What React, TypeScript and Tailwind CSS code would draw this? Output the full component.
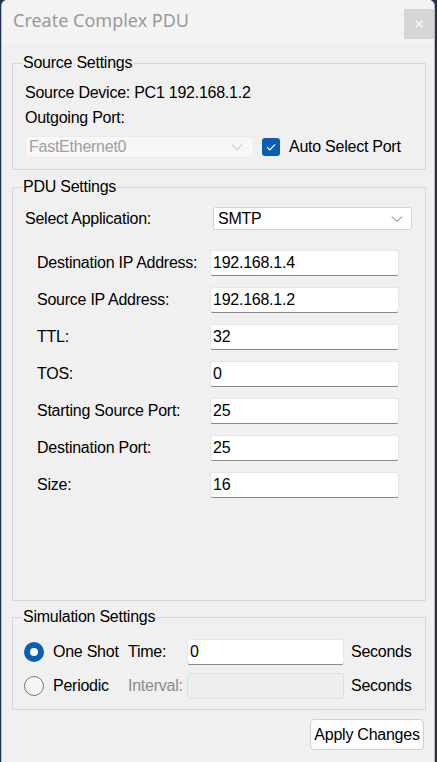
import React from "react";

const F = { fontFamily: '"Liberation Sans", Arial, sans-serif' };

function Chevron({ color = "#6b6b6b" }: { color?: string }) {
  return (
    <svg width="12" height="8" viewBox="0 0 12 8" fill="none">
      <path d="M1 1.5 L6 6.5 L11 1.5" stroke={color} strokeWidth="1" />
    </svg>
  );
}

function Field({ label, value }: { label: string; value: string }) {
  return (
    <div className="flex items-center h-[26px]">
      <div className="w-[173px] text-[16px] tracking-[-0.25px] text-black">{label}</div>
      <div className="w-[189px] h-[26px] bg-white border border-[#e6e6e6] border-b-[#8a8a8a] rounded-[3px] flex items-center pl-[2px] text-[16px] text-black">
        {value}
      </div>
    </div>
  );
}

export default function App() {
  return (
    <div className="w-[437px] h-[762px] bg-[#1f3455] flex" style={F}>
      <div className="ml-[1px] w-[434px] h-[762px] bg-[#f0f0f0] border-l border-r border-[#b9b9b9] rounded-t-[6px] flex flex-col overflow-hidden">
        {/* Title bar */}
        <div className="h-[43px] bg-[#f3f3f3] flex items-start shrink-0">
          <div
            className="ml-[11px] mt-[8px] text-[18px] text-[#9a9a9a] leading-[24px]"
            style={{ fontFamily: '"Noto Sans", "Open Sans", sans-serif' }}
          >
            Create Complex PDU
          </div>
          <div className="ml-auto mt-[9px] mr-[0px] w-[30px] h-[30px] bg-[#d5d5d5] flex items-center justify-center">
            <svg width="10" height="10" viewBox="0 0 10 10">
              <path d="M1.5 1.5 L8.5 8.5 M8.5 1.5 L1.5 8.5" stroke="#f4f4f4" strokeWidth="1.6" />
            </svg>
          </div>
        </div>

        <div className="pl-[10px] pr-[8px] flex flex-col text-black text-[16px] tracking-[-0.25px]">
          {/* Source Settings */}
          <fieldset className="mt-[11px] border border-[#d7d7d7] p-0">
            <legend className="ml-[9px] px-[1px] leading-[18px] text-[16px]">Source Settings</legend>
            <div className="pl-[12px] pr-[10px] pb-[10px]">
              <div className="mt-[11px] h-[20px] leading-[20px]">Source Device: PC1 192.168.1.2</div>
              <div className="mt-[5px] h-[20px] leading-[20px]">Outgoing Port:</div>
              <div className="mt-[7px] flex items-center">
                <div className="w-[229px] h-[22px] bg-[#f7f7f7] border border-[#ececec] rounded-[3px] flex items-center pl-[3px] pr-[10px] text-[#a0a0a0]">
                  <span>FastEthernet0</span>
                  <span className="ml-auto">
                    <Chevron color="#b4b4b4" />
                  </span>
                </div>
                <div className="ml-[8px] w-[18px] h-[18px] rounded-[3px] bg-[#0b5cb3] flex items-center justify-center">
                  <svg width="12" height="10" viewBox="0 0 12 10" fill="none">
                    <path d="M2 5.2 L4.8 8 L10 2.5" stroke="#ffffff" strokeWidth="1.1" />
                  </svg>
                </div>
                <div className="ml-[9px]">Auto Select Port</div>
              </div>
            </div>
          </fieldset>

          {/* PDU Settings */}
          <fieldset className="mt-[8px] border border-[#d7d7d7] p-0">
            <legend className="ml-[9px] px-[1px] leading-[18px] text-[16px]">PDU Settings</legend>
            <div className="pl-[12px] pr-[10px] pb-[102px]">
              <div className="mt-[11px] flex items-center h-[23px]">
                <div className="w-[188px]">Select Application:</div>
                <div className="w-[199px] h-[23px] bg-white border border-[#d2d2d2] rounded-[3px] flex items-center pl-[4px] pr-[8px]">
                  <span>SMTP</span>
                  <span className="ml-auto">
                    <Chevron />
                  </span>
                </div>
              </div>
              <div className="mt-[20px] pl-[12px] flex flex-col gap-[11px]">
                <Field label="Destination IP Address:" value="192.168.1.4" />
                <Field label="Source IP Address:" value="192.168.1.2" />
                <Field label="TTL:" value="32" />
                <Field label="TOS:" value="0" />
                <Field label="Starting Source Port:" value="25" />
                <Field label="Destination Port:" value="25" />
                <Field label="Size:" value="16" />
              </div>
            </div>
          </fieldset>

          {/* Simulation Settings */}
          <fieldset className="mt-[7px] border border-[#d7d7d7] p-0">
            <legend className="ml-[9px] px-[1px] leading-[18px] text-[16px]">Simulation Settings</legend>
            <div className="pl-[11px] pr-[10px] pb-[10px]">
              <div className="mt-[13px] flex items-center h-[26px]">
                <div className="w-[104px] flex items-center">
                  <div className="w-[20px] h-[20px] rounded-full bg-[#0b5cb3] flex items-center justify-center">
                    <div className="w-[8px] h-[8px] rounded-full bg-white" />
                  </div>
                  <span className="ml-[9px]">One Shot</span>
                </div>
                <div className="w-[59px]">Time:</div>
                <div className="w-[157px] h-[26px] bg-white border border-[#e6e6e6] border-b-[#8a8a8a] rounded-[3px] flex items-center pl-[2px]">
                  0
                </div>
                <div className="ml-[7px]">Seconds</div>
              </div>
              <div className="mt-[8px] flex items-center h-[26px]">
                <div className="w-[104px] flex items-center">
                  <div className="w-[20px] h-[20px] rounded-full border border-[#777777] bg-[#f5f5f5]" />
                  <span className="ml-[9px]">Periodic</span>
                </div>
                <div className="w-[59px] text-[#8c8c8c]">Interval:</div>
                <div className="w-[157px] h-[26px] bg-[#eeeeee] border border-[#dedede] rounded-[3px]" />
                <div className="ml-[7px]">Seconds</div>
              </div>
            </div>
          </fieldset>

          <div className="mt-[9px] flex justify-end pr-[2px]">
            <div className="w-[114px] h-[31px] bg-[#fdfdfd] border border-[#d0d0d0] rounded-[4px] flex items-center justify-center">
              Apply Changes
            </div>
          </div>
        </div>
      </div>
    </div>
  );
}
